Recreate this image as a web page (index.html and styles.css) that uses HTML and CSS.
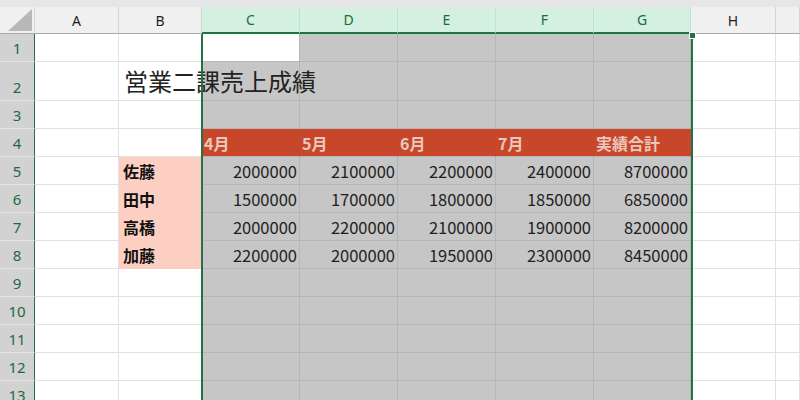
FILE: index.html
```html
<!DOCTYPE html>
<html lang="ja">
<head>
    <meta charset="UTF-8">
    <meta name="viewport" content="width=device-width, initial-scale=1.0">
    <title>営業二課売上成績</title>
    <link rel="stylesheet" href="styles.css">
</head>
<body>
    <div class="ribbon-edge"></div>

    <div class="grid">
        <!-- column headers -->
        <div class="corner">
            <svg width="24" height="22" viewBox="0 0 24 22"><polygon points="24,0 24,22 0,22" fill="#b8b8b8"/></svg>
        </div>
        <div class="col-head">A</div>
        <div class="col-head">B</div>
        <div class="col-head on">C</div>
        <div class="col-head on">D</div>
        <div class="col-head on">E</div>
        <div class="col-head on">F</div>
        <div class="col-head on">G</div>
        <div class="col-head">H</div>
        <div class="col-head"></div>

        <!-- 1 -->
        <div class="row-head">1</div>
        <div class="cell"></div>
        <div class="cell"></div>
        <div class="cell active"></div>
        <div class="cell sel"></div>
        <div class="cell sel"></div>
        <div class="cell sel"></div>
        <div class="cell sel"></div>
        <div class="cell"></div>
        <div class="cell"></div>

        <!-- 2 -->
        <div class="row-head tall">2</div>
        <div class="cell"></div>
        <div class="cell title-cell"><span class="title">営業二課売上成績</span></div>
        <div class="cell sel"></div>
        <div class="cell sel"></div>
        <div class="cell sel"></div>
        <div class="cell sel"></div>
        <div class="cell sel"></div>
        <div class="cell"></div>
        <div class="cell"></div>

        <!-- 3 -->
        <div class="row-head">3</div>
        <div class="cell"></div>
        <div class="cell"></div>
        <div class="cell sel"></div>
        <div class="cell sel"></div>
        <div class="cell sel"></div>
        <div class="cell sel"></div>
        <div class="cell sel"></div>
        <div class="cell"></div>
        <div class="cell"></div>

        <!-- 4 -->
        <div class="row-head">4</div>
        <div class="cell"></div>
        <div class="cell"></div>
        <div class="cell month">4月</div>
        <div class="cell month">5月</div>
        <div class="cell month">6月</div>
        <div class="cell month">7月</div>
        <div class="cell month">実績合計</div>
        <div class="cell"></div>
        <div class="cell"></div>

        <!-- 5 -->
        <div class="row-head">5</div>
        <div class="cell"></div>
        <div class="cell name">佐藤</div>
        <div class="cell sel num">2000000</div>
        <div class="cell sel num">2100000</div>
        <div class="cell sel num">2200000</div>
        <div class="cell sel num">2400000</div>
        <div class="cell sel num">8700000</div>
        <div class="cell"></div>
        <div class="cell"></div>

        <!-- 6 -->
        <div class="row-head">6</div>
        <div class="cell"></div>
        <div class="cell name">田中</div>
        <div class="cell sel num">1500000</div>
        <div class="cell sel num">1700000</div>
        <div class="cell sel num">1800000</div>
        <div class="cell sel num">1850000</div>
        <div class="cell sel num">6850000</div>
        <div class="cell"></div>
        <div class="cell"></div>

        <!-- 7 -->
        <div class="row-head">7</div>
        <div class="cell"></div>
        <div class="cell name">高橋</div>
        <div class="cell sel num">2000000</div>
        <div class="cell sel num">2200000</div>
        <div class="cell sel num">2100000</div>
        <div class="cell sel num">1900000</div>
        <div class="cell sel num">8200000</div>
        <div class="cell"></div>
        <div class="cell"></div>

        <!-- 8 -->
        <div class="row-head">8</div>
        <div class="cell"></div>
        <div class="cell name">加藤</div>
        <div class="cell sel num">2200000</div>
        <div class="cell sel num">2000000</div>
        <div class="cell sel num">1950000</div>
        <div class="cell sel num">2300000</div>
        <div class="cell sel num">8450000</div>
        <div class="cell"></div>
        <div class="cell"></div>

        <!-- 9 - 13 -->
        <div class="row-head">9</div>
        <div class="cell"></div><div class="cell"></div>
        <div class="cell sel"></div><div class="cell sel"></div><div class="cell sel"></div><div class="cell sel"></div><div class="cell sel"></div>
        <div class="cell"></div><div class="cell"></div>

        <div class="row-head">10</div>
        <div class="cell"></div><div class="cell"></div>
        <div class="cell sel"></div><div class="cell sel"></div><div class="cell sel"></div><div class="cell sel"></div><div class="cell sel"></div>
        <div class="cell"></div><div class="cell"></div>

        <div class="row-head">11</div>
        <div class="cell"></div><div class="cell"></div>
        <div class="cell sel"></div><div class="cell sel"></div><div class="cell sel"></div><div class="cell sel"></div><div class="cell sel"></div>
        <div class="cell"></div><div class="cell"></div>

        <div class="row-head">12</div>
        <div class="cell"></div><div class="cell"></div>
        <div class="cell sel"></div><div class="cell sel"></div><div class="cell sel"></div><div class="cell sel"></div><div class="cell sel"></div>
        <div class="cell"></div><div class="cell"></div>

        <div class="row-head">13</div>
        <div class="cell"></div><div class="cell"></div>
        <div class="cell sel"></div><div class="cell sel"></div><div class="cell sel"></div><div class="cell sel"></div><div class="cell sel"></div>
        <div class="cell"></div><div class="cell"></div>

        <!-- outline of the selected range C:G -->
        <div class="selection"><div class="fill-handle"></div></div>
    </div>
</body>
</html>
```

FILE: styles.css
```css
html, body {
    margin: 0;
    padding: 0;
    height: 100%;
    overflow: hidden;
}
body {
    background-color: #ffffff;
    font-family: "Noto Sans CJK JP", "Noto Sans", sans-serif;
    color: #1f1f1f;
}
.ribbon-edge {
    height: 7px;
    background-color: #e6e6e8;
}
.grid {
    position: relative;
    display: grid;
    grid-template-columns: 35px 84px 83px 98px 98px 98px 98px 97px 85px 1fr;
    grid-template-rows: 27px 28px 39px repeat(11, 28px);
}
.grid > div {
    box-sizing: border-box;
}
.corner {
    background-color: #f0f0f0;
    border-right: 1px solid #d4d4d4;
    border-bottom: 1px solid #a8a8a8;
    display: flex;
    align-items: flex-end;
    justify-content: flex-end;
    padding: 0 2px 2px 0;
}
.corner svg {
    display: block;
}
.col-head {
    background-color: #f0f0f0;
    border-right: 1px solid #d4d4d4;
    border-bottom: 1px solid #a8a8a8;
    display: flex;
    align-items: center;
    justify-content: center;
    font-family: "Noto Sans", sans-serif;
    font-size: 14px;
    color: #1f1f1f;
}
.col-head.on {
    background-color: #d3f0e0;
    border-right-color: #bfe3cf;
    border-bottom: 2px solid #217346;
    color: #1b6b3e;
}
.row-head {
    background-color: #d2d2d2;
    border-right: 1px solid #217346;
    border-bottom: 1px solid #e4e4e4;
    display: flex;
    align-items: center;
    justify-content: center;
    font-family: "Noto Sans", sans-serif;
    font-size: 15px;
    color: #1b6b3e;
    padding-top: 1px;
}
.row-head.tall {
    align-items: flex-end;
    padding-bottom: 3px;
}
.cell {
    background-color: #ffffff;
    border-right: 1px solid #e1e1e1;
    border-bottom: 1px solid #e1e1e1;
    display: flex;
    align-items: center;
    font-size: 16px;
    white-space: nowrap;
    padding: 0 3px;
}
.cell.sel {
    background-color: #c6c6c6;
    border-right-color: #b6b6b6;
    border-bottom-color: #b6b6b6;
}
.cell.active {
    background-color: #ffffff;
    border-right-color: #b6b6b6;
    border-bottom-color: #b6b6b6;
}
.title-cell {
    align-items: flex-end;
    overflow: visible;
}
.title {
    position: relative;
    z-index: 1;
    font-size: 24px;
    line-height: 1;
    color: #222222;
    margin: 0 0 7px 2px;
}
.month {
    background-color: #c8472a;
    border-right-color: #c8472a;
    border-bottom-color: #b6b6b6;
    color: #e8c8be;
    font-weight: bold;
    padding-left: 2px;
}
.name {
    background-color: #fdcfc2;
    border-right-color: #fdcfc2;
    border-bottom-color: #fdcfc2;
    font-weight: bold;
    color: #111111;
    padding-left: 4px;
}
.num {
    justify-content: flex-end;
    padding-right: 2px;
    font-size: 16.5px;
    color: #1f1f1f;
}
.selection {
    position: absolute;
    left: 201px;
    top: 27px;
    width: 492px;
    bottom: 0;
    border-left: 2px solid #217346;
    border-right: 2px solid #217346;
    pointer-events: none;
    z-index: 2;
}
.fill-handle {
    position: absolute;
    right: -5px;
    top: -2px;
    width: 5px;
    height: 5px;
    background-color: #217346;
    border: 1px solid #ffffff;
}
```
